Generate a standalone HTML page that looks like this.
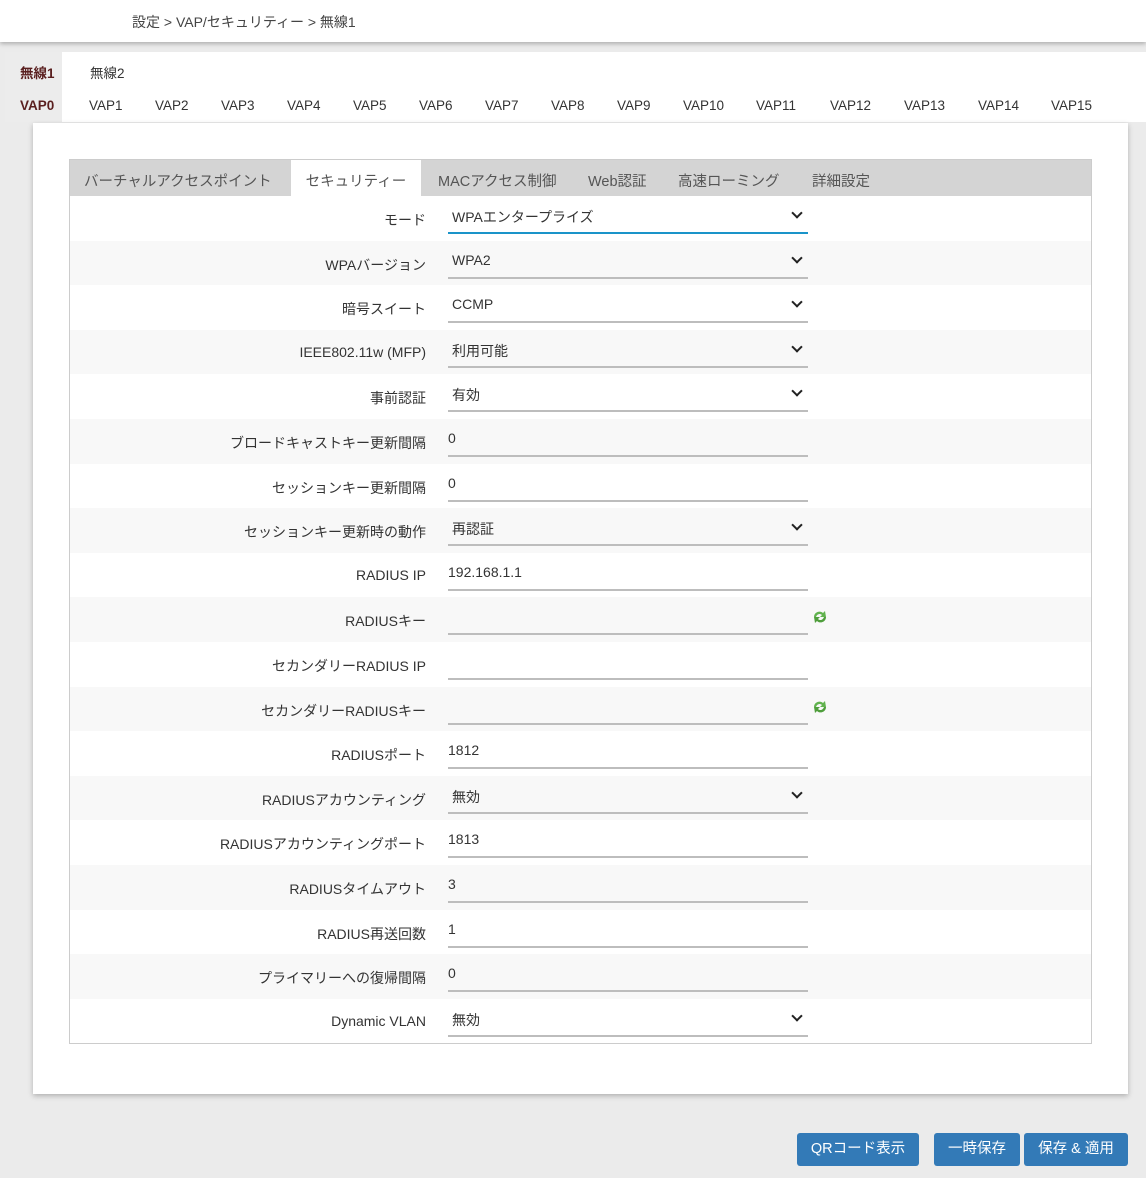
<!DOCTYPE html>
<html><head><meta charset="utf-8"><style>
*{box-sizing:border-box;margin:0;padding:0}
body{width:1146px;height:1178px;background:#ebebeb;font-family:"Liberation Sans","Noto Sans CJK JP",sans-serif;color:#333;font-size:14px;position:relative;overflow:hidden}
.hdr{position:absolute;left:0;top:0;width:1146px;height:42px;background:#fff;box-shadow:0 2px 4px rgba(0,0,0,.25)}
.hdr span{position:absolute;left:132px;top:12px;font-size:14px;color:#444}
.tabs{position:absolute;left:5px;top:52px;width:1141px;height:70px;background:#fff}
.t{position:absolute;font-size:13.5px;color:#333}
.act{background:#ececec;font-weight:bold;color:#5a1f1f}
.panel{position:absolute;left:33px;top:123px;width:1095px;height:971px;background:#fff;box-shadow:0 2px 5px rgba(0,0,0,.25)}
.box{position:absolute;left:69px;top:159px;width:1023px;height:885px;border:1px solid #ccc;background:#fff}
.tb{height:36px;background:#d4d4d4;position:relative}
.tb span{position:absolute;top:10px;font-size:14.5px;color:#555}
.tb .on{background:#fff;top:0;height:36px;padding-top:10px;left:221px;width:130px;text-align:center;color:#555}
.row{height:44.6px;position:relative}
.row:nth-child(even){background:#f8f8f8}
.lb{position:absolute;right:665px;top:14px;font-size:14px;white-space:nowrap}
.in{position:absolute;left:378px;width:360px;top:6px;height:32px;border-bottom:2px solid #bdbdbd;font-size:14px;padding:5px 0 0 0}
.sel{padding-left:4px}
.blue{border-bottom-color:#1a94c9}
.chev{position:absolute;right:7px;top:7px;width:8px;height:8px;border-right:2px solid #222;border-bottom:2px solid #222;transform:rotate(45deg)}
.ref{position:absolute;left:743px;top:12px;width:14px;height:16px}
.btn{position:absolute;top:1133px;height:33px;background:#337ab7;color:#fff;border-radius:3px;font-size:14.5px;text-align:center;line-height:33px}
</style></head><body>
<div class="hdr"><span>設定 &gt; VAP/セキュリティー &gt; 無線1</span></div>
<div class="tabs">
<div class="t act" style="left:0;top:0;width:57px;height:36px;padding:10px 0 0 15px">無線1</div>
<div class="t" style="left:85px;top:10px">無線2</div>
<div class="t act" style="left:0;top:36px;width:57px;height:34px;padding:10px 0 0 15px">VAP0</div>
<div class="t" style="left:84px;top:46px">VAP1</div>
<div class="t" style="left:150px;top:46px">VAP2</div>
<div class="t" style="left:216px;top:46px">VAP3</div>
<div class="t" style="left:282px;top:46px">VAP4</div>
<div class="t" style="left:348px;top:46px">VAP5</div>
<div class="t" style="left:414px;top:46px">VAP6</div>
<div class="t" style="left:480px;top:46px">VAP7</div>
<div class="t" style="left:546px;top:46px">VAP8</div>
<div class="t" style="left:612px;top:46px">VAP9</div>
<div class="t" style="left:678px;top:46px">VAP10</div>
<div class="t" style="left:751px;top:46px">VAP11</div>
<div class="t" style="left:825px;top:46px">VAP12</div>
<div class="t" style="left:899px;top:46px">VAP13</div>
<div class="t" style="left:973px;top:46px">VAP14</div>
<div class="t" style="left:1046px;top:46px">VAP15</div>
</div>
<div class="panel"></div>
<div class="box">
<div class="tb">
<span style="left:14px">バーチャルアクセスポイント</span>
<span class="on">セキュリティー</span>
<span style="left:368px">MACアクセス制御</span>
<span style="left:518px">Web認証</span>
<span style="left:608px">高速ローミング</span>
<span style="left:742px">詳細設定</span>
</div>
<div>
<div class="row"><span class="lb">モード</span><div class="in sel blue">WPAエンタープライズ<i class="chev"></i></div></div>
<div class="row"><span class="lb">WPAバージョン</span><div class="in sel">WPA2<i class="chev"></i></div></div>
<div class="row"><span class="lb">暗号スイート</span><div class="in sel">CCMP<i class="chev"></i></div></div>
<div class="row"><span class="lb">IEEE802.11w (MFP)</span><div class="in sel">利用可能<i class="chev"></i></div></div>
<div class="row"><span class="lb">事前認証</span><div class="in sel">有効<i class="chev"></i></div></div>
<div class="row"><span class="lb">ブロードキャストキー更新間隔</span><div class="in">0</div></div>
<div class="row"><span class="lb">セッションキー更新間隔</span><div class="in">0</div></div>
<div class="row"><span class="lb">セッションキー更新時の動作</span><div class="in sel">再認証<i class="chev"></i></div></div>
<div class="row"><span class="lb">RADIUS IP</span><div class="in">192.168.1.1</div></div>
<div class="row"><span class="lb">RADIUSキー</span><div class="in"></div><svg class="ref" viewBox="0 0 14 16"><path d="M1 8 C1 3 7 1 10 4 L12 2 L13 8 L7 8 L9 6 C7 4 4 5 3 8Z" fill="#62b34f"/><path d="M13 8 C13 13 7 15 4 12 L2 14 L1 8 L7 8 L5 10 C7 12 10 11 11 8Z" fill="#4f9e3c"/></svg></div>
<div class="row"><span class="lb">セカンダリーRADIUS IP</span><div class="in"></div></div>
<div class="row"><span class="lb">セカンダリーRADIUSキー</span><div class="in"></div><svg class="ref" viewBox="0 0 14 16"><path d="M1 8 C1 3 7 1 10 4 L12 2 L13 8 L7 8 L9 6 C7 4 4 5 3 8Z" fill="#62b34f"/><path d="M13 8 C13 13 7 15 4 12 L2 14 L1 8 L7 8 L5 10 C7 12 10 11 11 8Z" fill="#4f9e3c"/></svg></div>
<div class="row"><span class="lb">RADIUSポート</span><div class="in">1812</div></div>
<div class="row"><span class="lb">RADIUSアカウンティング</span><div class="in sel">無効<i class="chev"></i></div></div>
<div class="row"><span class="lb">RADIUSアカウンティングポート</span><div class="in">1813</div></div>
<div class="row"><span class="lb">RADIUSタイムアウト</span><div class="in">3</div></div>
<div class="row"><span class="lb">RADIUS再送回数</span><div class="in">1</div></div>
<div class="row"><span class="lb">プライマリーへの復帰間隔</span><div class="in">0</div></div>
<div class="row"><span class="lb">Dynamic VLAN</span><div class="in sel">無効<i class="chev"></i></div></div>
</div>
</div>
<div class="btn" style="left:797px;width:122px">QRコード表示</div>
<div class="btn" style="left:934px;width:86px">一時保存</div>
<div class="btn" style="left:1024px;width:104px">保存 &amp; 適用</div>
</body></html>
